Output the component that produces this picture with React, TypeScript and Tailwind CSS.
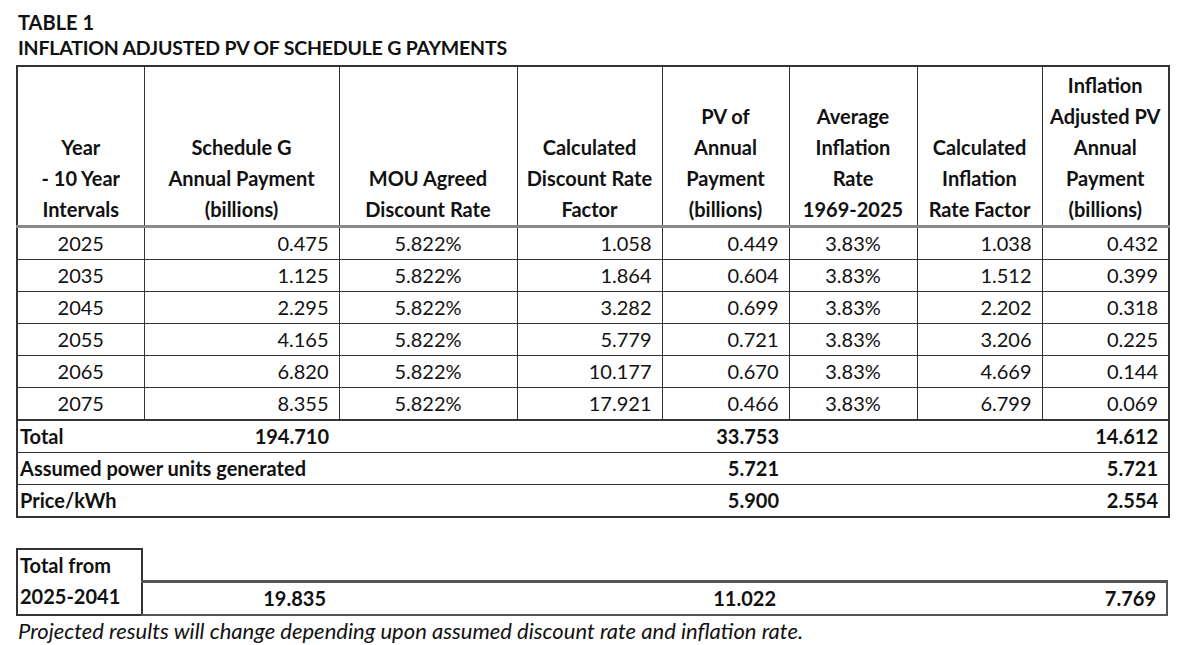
import React from "react";

const rows = [
  ["2025", "0.475", "5.822%", "1.058", "0.449", "3.83%", "1.038", "0.432"],
  ["2035", "1.125", "5.822%", "1.864", "0.604", "3.83%", "1.512", "0.399"],
  ["2045", "2.295", "5.822%", "3.282", "0.699", "3.83%", "2.202", "0.318"],
  ["2055", "4.165", "5.822%", "5.779", "0.721", "3.83%", "3.206", "0.225"],
  ["2065", "6.820", "5.822%", "10.177", "0.670", "3.83%", "4.669", "0.144"],
  ["2075", "8.355", "5.822%", "17.921", "0.466", "3.83%", "6.799", "0.069"],
];

const headers = [
  ["Year", "- 10 Year", "Intervals"],
  ["Schedule G", "Annual Payment", "(billions)"],
  ["MOU Agreed", "Discount Rate"],
  ["Calculated", "Discount Rate", "Factor"],
  ["PV of", "Annual", "Payment", "(billions)"],
  ["Average", "Inflation", "Rate", "1969-2025"],
  ["Calculated", "Inflation", "Rate Factor"],
  ["Inflation", "Adjusted PV", "Annual", "Payment", "(billions)"],
];

const widths = ["w-[127px]", "w-[195px]", "w-[178px]", "w-[145px]", "w-[127px]", "w-[128px]", "w-[125px]", "w-[127px]"];
const centered = [0, 2, 5];

const App: React.FC = () => {
  return (
    <div className="min-h-screen bg-white text-[#111] font-['Lato','Liberation_Sans',sans-serif] pt-[9px] pl-[16px]">
      <div className="pl-[2px] text-[20px] font-bold leading-[26px]">TABLE 1</div>
      <div className="pl-[2px] text-[19.5px] font-bold leading-[26px] tracking-[-0.2px]">
        INFLATION ADJUSTED PV OF SCHEDULE G PAYMENTS
      </div>

      <table className="table-fixed border-collapse w-[1152px] border-2 border-[#333] text-[20px] leading-[31px] mt-[4px]">
        <colgroup>
          {widths.map((w, i) => (
            <col key={i} className={w} />
          ))}
        </colgroup>
        <thead>
          <tr className="border-b-[3px] border-[#8a8a8a]">
            {headers.map((h, i) => (
              <th
                key={i}
                className="border-x border-[#333] align-bottom font-bold text-center px-0 h-[160px]"
              >
                {h.map((line, j) => (
                  <div key={j} className="whitespace-nowrap">{line}</div>
                ))}
              </th>
            ))}
          </tr>
        </thead>
        <tbody>
          {rows.map((r, i) => (
            <tr key={i} className="border-b border-[#333] h-[31px]">
              {r.map((c, j) => (
                <td
                  key={j}
                  className={
                    "border-x border-[#333] " +
                    (centered.includes(j) ? "text-center" : "text-right pr-[10px]")
                  }
                >
                  {c}
                </td>
              ))}
            </tr>
          ))}
          <tr className="border-t-2 border-b border-[#333] h-[31px] font-bold">
            <td className="pl-[2px]">Total</td>
            <td className="text-right pr-[10px]">194.710</td>
            <td></td>
            <td></td>
            <td className="text-right pr-[10px]">33.753</td>
            <td></td>
            <td></td>
            <td className="text-right pr-[10px]">14.612</td>
          </tr>
          <tr className="border-b border-[#333] h-[31px] font-bold">
            <td colSpan={2} className="pl-[2px] whitespace-nowrap">Assumed power units generated</td>
            <td></td>
            <td></td>
            <td className="text-right pr-[10px]">5.721</td>
            <td></td>
            <td></td>
            <td className="text-right pr-[10px]">5.721</td>
          </tr>
          <tr className="h-[31px] font-bold">
            <td colSpan={2} className="pl-[2px]">Price/kWh</td>
            <td></td>
            <td></td>
            <td className="text-right pr-[10px]">5.900</td>
            <td></td>
            <td></td>
            <td className="text-right pr-[10px]">2.554</td>
          </tr>
        </tbody>
      </table>

      <div className="mt-[30px] flex w-[1152px] text-[20px] font-bold leading-[31px]">
        <div className="w-[127px] border-2 border-[#333] pl-[2px] whitespace-nowrap">
          <div>Total from</div>
          <div>2025-2041</div>
        </div>
        <div className="flex-1 flex flex-col">
          <div className="h-[32px]"></div>
          <div className="flex-1 grid grid-cols-[195px_178px_145px_127px_128px_125px_1fr] border-t-[3px] border-r-2 border-b-2 border-[#555] -ml-[2px]">
            <div className="text-right pr-[10px]">19.835</div>
            <div></div>
            <div></div>
            <div className="text-right pr-[10px]">11.022</div>
            <div></div>
            <div></div>
            <div className="text-right pr-[10px]">7.769</div>
          </div>
        </div>
      </div>

      <div className="pl-[2px] text-[22px] italic leading-[30px]">
        Projected results will change depending upon assumed discount rate and inflation rate.
      </div>
    </div>
  );
};

export default App;
